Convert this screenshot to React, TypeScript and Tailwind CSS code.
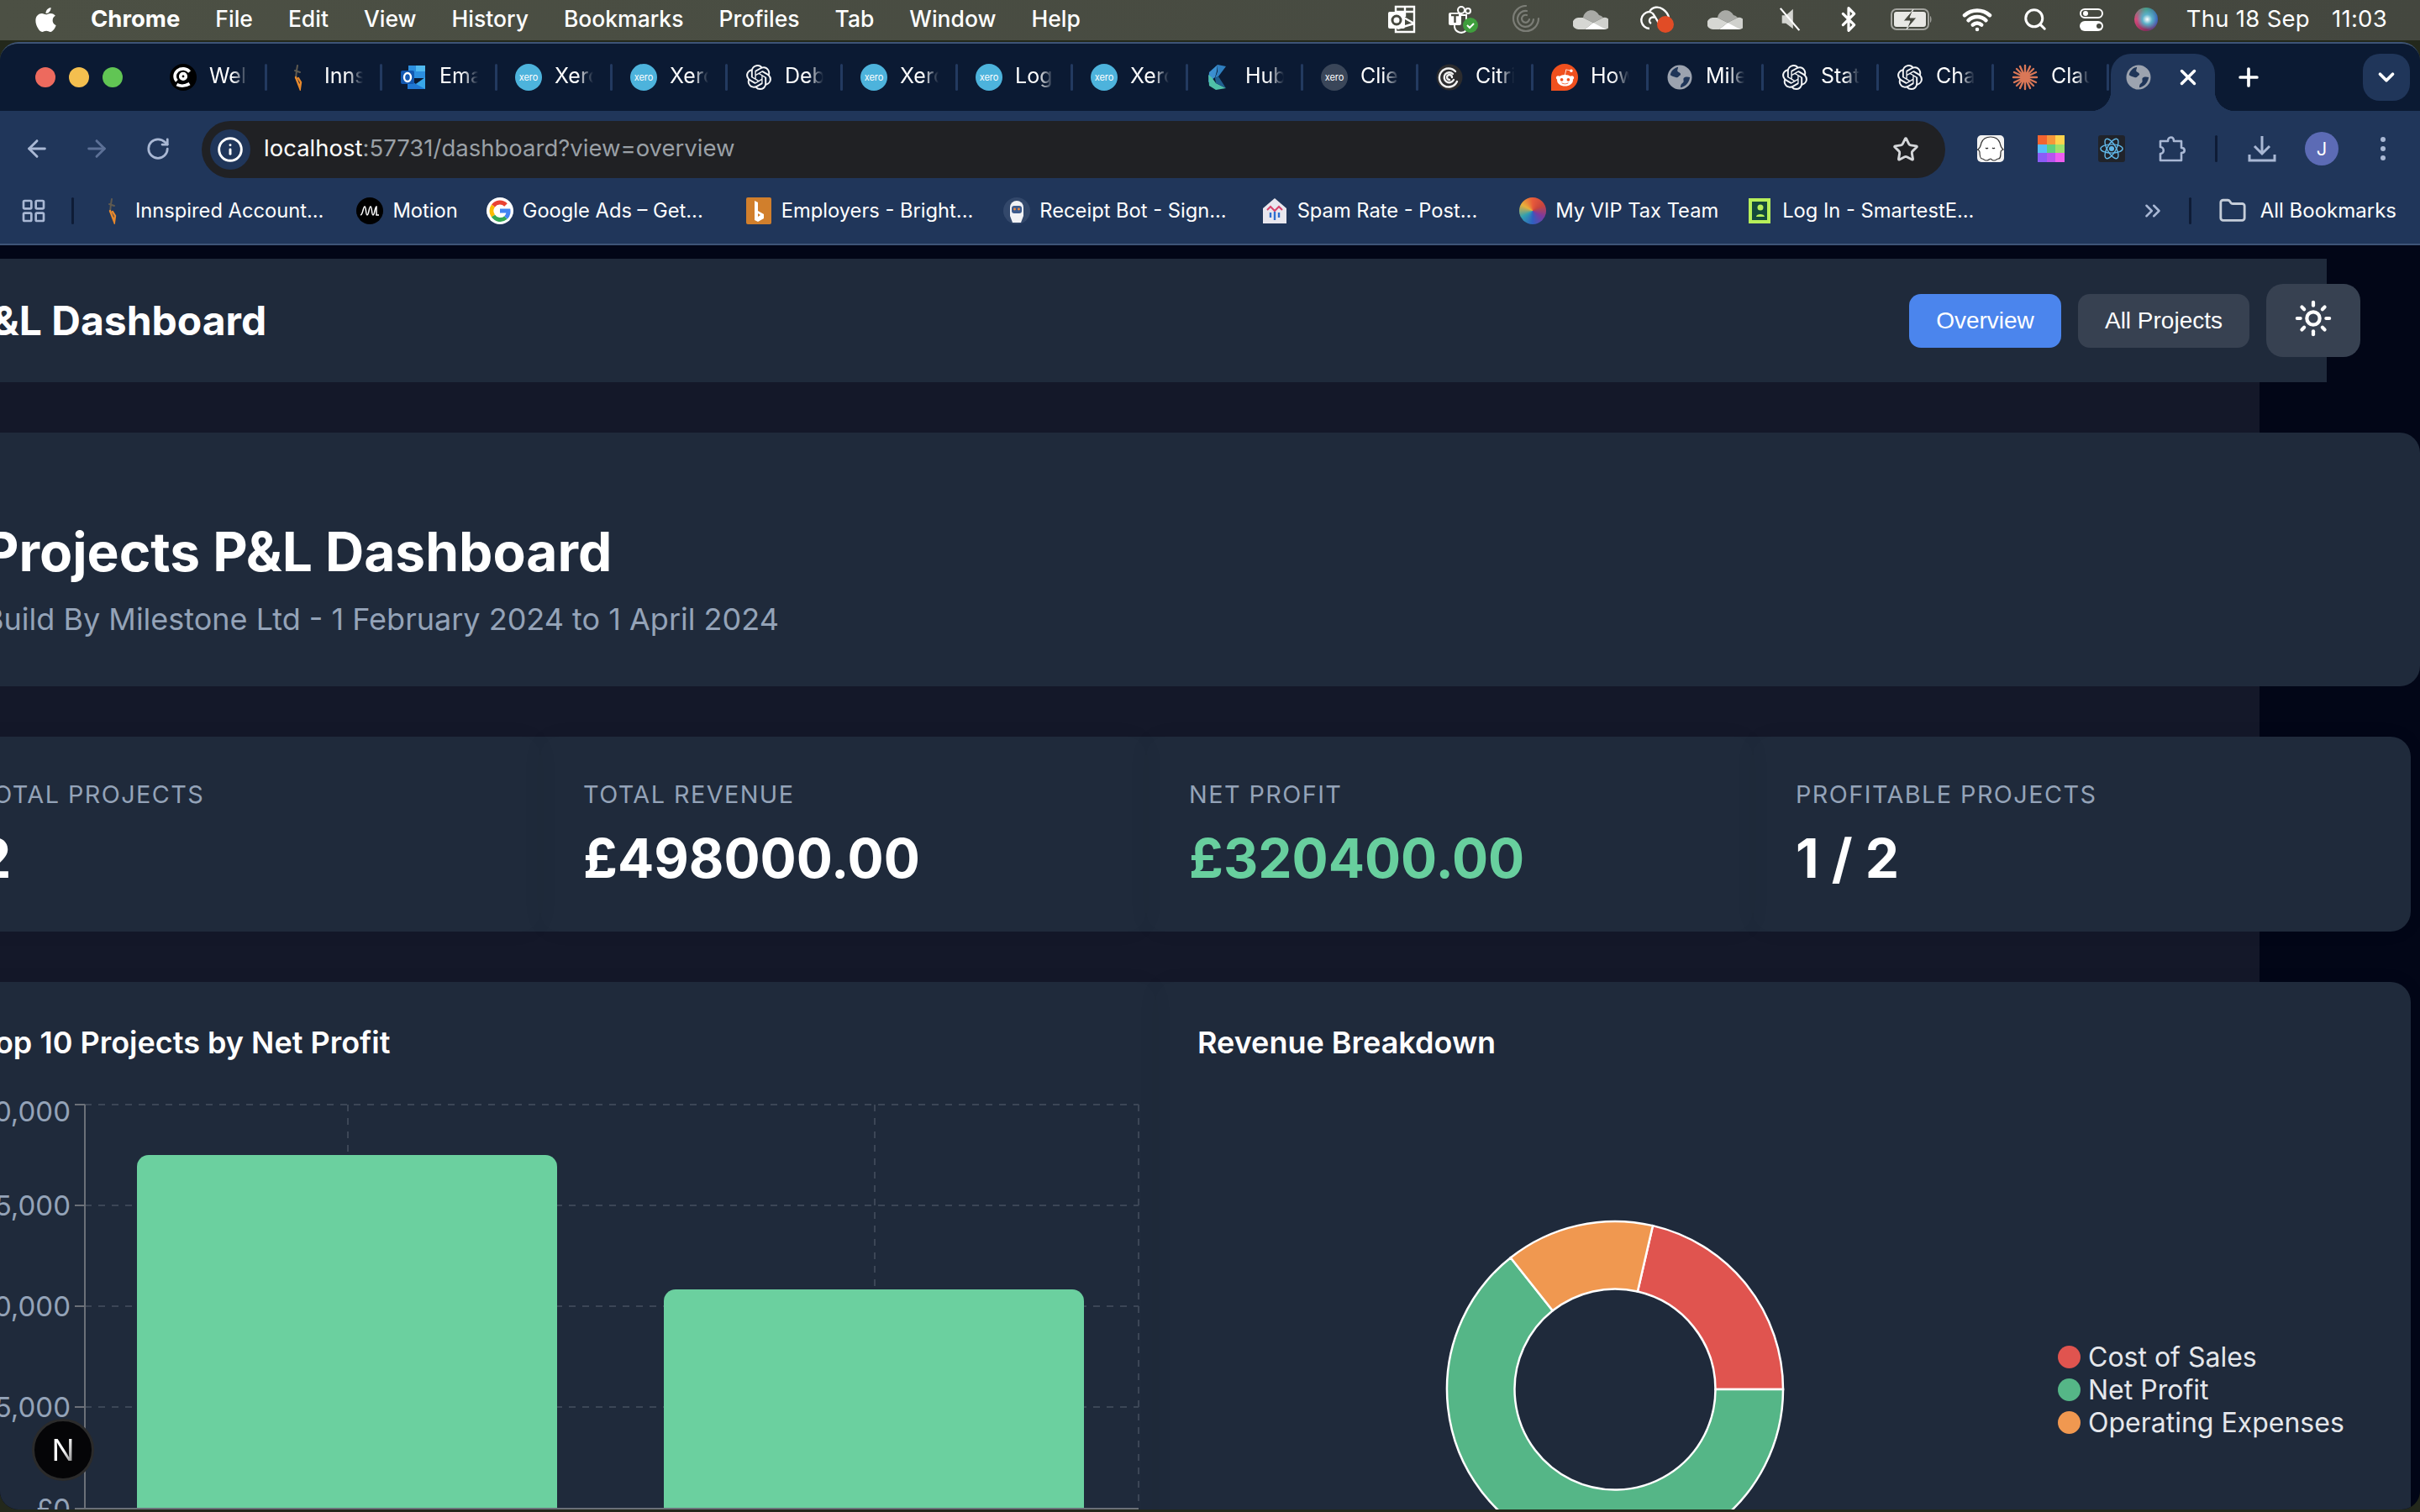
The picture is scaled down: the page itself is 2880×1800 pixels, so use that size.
import React from 'react';
import {
  ArrowLeft,
  ArrowRight,
  Bluetooth,
  ChevronDown,
  ChevronsRight,
  Folder,
  Info,
  LayoutGrid,
  Plus,
  RotateCw,
  Search,
  Star,
  Sun,
  Wifi,
  X,
} from 'lucide-react';
import { FaApple, FaRedditAlien } from 'react-icons/fa';
import { SiOpenai } from 'react-icons/si';

const ui = "font-['Inter',sans-serif]";

const XeroIcon = ({ dark = false }: { dark?: boolean }) => (
  <span className={`flex h-[32px] w-[32px] items-center justify-center rounded-full font-['Inter',sans-serif] text-[11px] text-white ${dark ? 'bg-[#3a4659]' : 'bg-[#4db3dc]'}`}>
    xero
  </span>
);

const SpiralIcon = () => (
  <svg viewBox="0 0 32 32" className="h-[32px] w-[32px]">
    <circle cx="16" cy="16" r="15.5" fill="#2c2c2e" />
    <path d="M25 21a11 11 0 1 1-2-12M21 19a6 6 0 1 1-1-7M16 19a3 3 0 1 1 3-3" fill="none" stroke="#f0f0f0" strokeWidth="2.4" strokeLinecap="round" />
  </svg>
);

const ClaudeIcon = () => (
  <svg viewBox="0 0 32 32" className="h-[32px] w-[32px]" stroke="#d97757" strokeWidth="2.4" strokeLinecap="round">
    <path d="M16 2v28M2 16h28M6 6l20 20M26 6L6 26M10 3l12 26M22 3L10 29M3 10l26 12M29 10L3 22" />
  </svg>
);

const RedditIcon = () => (
  <span className="relative flex h-[32px] w-[32px] items-center justify-center rounded-full rounded-bl-[6px] bg-[#f0501e] text-white">
    <FaRedditAlien size={23} />
  </span>
);

const MilestoneIcon = () => (
  <svg viewBox="0 0 32 32" className="h-[30px] w-[30px]">
    <circle cx="16" cy="16" r="14" fill="none" stroke="#9ca3af" strokeWidth="3" />
    <circle cx="16" cy="16" r="14" fill="#9ca3af" />
    <path d="M14 3c-5 1-9 5-10 10 2 2 5 2 7 3 3 1 4-2 6-3 1-3-3-3-4-5 0-2 1-3 1-5zM29 16c-3-1-6-1-8 1-1 2 1 4-1 6-2 1-3 3-3 6 6-1 11-6 12-13z" fill="#1f3558" />
  </svg>
);

const OutlookIcon = () => (
  <svg viewBox="0 0 32 32" className="h-[32px] w-[32px]">
    <rect x="10" y="2" width="20" height="15" fill="#2c8fe0" />
    <rect x="19" y="2" width="11" height="7" fill="#50b9f0" />
    <path d="M9 17l10 7 11-7v13H9z" fill="#1f78d4" />
    <path d="M19 24l11-8v14z" fill="#38a6e8" />
    <rect x="1" y="8" width="16" height="16" rx="2" fill="#1358b0" />
    <ellipse cx="9" cy="16" rx="4" ry="5" fill="none" stroke="#fff" strokeWidth="2.4" />
  </svg>
);

const InspiredIcon = () => (
  <svg viewBox="0 0 32 32" className="h-[32px] w-[32px]" fill="none" strokeLinecap="round" strokeWidth="2">
    <path d="M15 2l-1 6M12 8l6 2M14 8l-1 9" stroke="#5f5a50" />
    <path d="M13 16l5 13 1-7-3-5" stroke="#e8892c" strokeWidth="2.4" />
  </svg>
);

const WelIcon = () => (
  <span className="flex h-[32px] w-[32px] items-center justify-center rounded-full bg-black">
    <svg viewBox="0 0 24 24" className="h-[26px] w-[26px]" fill="none" stroke="#fff" strokeWidth="3.4">
      <path d="M19 6A9.5 9.5 0 0 0 6 4.5C2 8 2 13 5 16" />
      <circle cx="12" cy="11" r="3" />
      <path d="M5 20c4 2 9 2 14-1" />
    </svg>
  </span>
);

const HubIcon = () => (
  <svg viewBox="0 0 32 32" className="h-[32px] w-[32px]">
    <path d="M14 1L4 10l-1 12 8-6 2-7z" fill="#3b8fd0" />
    <path d="M3 13l1 13 8 5 12-2-12-6-5-7z" fill="#4fc0a8" />
    <path d="M14 1l10 2-9 12-4 2 3-8z" fill="#2f7fc0" />
    <path d="M11 17l4-2 9 14-12-6z" fill="#1f5f90" />
  </svg>
);

const OpenAiIcon = () => <SiOpenai size={30} color="#f3f4f6" />;

const tabs: { label: string; icon: React.ReactNode }[] = [
  { label: 'Welcome', icon: <WelIcon /> },
  { label: 'Innspired', icon: <InspiredIcon /> },
  { label: 'Email', icon: <OutlookIcon /> },
  { label: 'Xero', icon: <XeroIcon /> },
  { label: 'Xero', icon: <XeroIcon /> },
  { label: 'Debug', icon: <OpenAiIcon /> },
  { label: 'Xero', icon: <XeroIcon /> },
  { label: 'Login', icon: <XeroIcon /> },
  { label: 'Xero', icon: <XeroIcon /> },
  { label: 'Hub', icon: <HubIcon /> },
  { label: 'Client', icon: <XeroIcon dark /> },
  { label: 'Citrix', icon: <SpiralIcon /> },
  { label: 'How', icon: <RedditIcon /> },
  { label: 'Milestone', icon: <MilestoneIcon /> },
  { label: 'Status', icon: <OpenAiIcon /> },
  { label: 'Chat', icon: <OpenAiIcon /> },
  { label: 'Claude', icon: <ClaudeIcon /> },
];

const menuItems = ['File', 'Edit', 'View', 'History', 'Bookmarks', 'Profiles', 'Tab', 'Window', 'Help'];

const OneDrive = () => (
  <svg viewBox="0 0 42 28" className="h-[28px] w-[42px]">
    <path d="M12 12a10 10 0 0 1 19-3 8 8 0 0 1 5 3l-12 6z" fill="#a9aaa6" />
    <path d="M24 18l12-6a7 7 0 0 1 3 14H28z" fill="#d0d1cd" />
    <path d="M12 12l12 6-10 8H7a7 7 0 0 1-1-14z" fill="#d6d7d3" />
    <path d="M14 26l10-8 15 8z" fill="#fff" />
  </svg>
);

const StatusIcons = () => (
  <div className="ml-auto flex items-center">
    <div className="flex w-[74px] justify-center">
      <svg viewBox="0 0 34 34" className="h-[34px] w-[34px]" fill="none" stroke="#fff" strokeWidth="2.4">
        <path d="M10 8V2h22v30H10v-4M32 22l-14-8M12 28l20-6M21 2v12M10 8h22" />
        <rect x="1" y="8" width="20" height="20" rx="2" fill="#fff" stroke="none" />
        <circle cx="11" cy="18" r="5" stroke="#46483f" strokeWidth="3" />
      </svg>
    </div>
    <div className="flex w-[74px] justify-center">
      <svg viewBox="0 0 38 34" className="h-[34px] w-[38px]">
        <circle cx="16" cy="6" r="4" fill="none" stroke="#fff" strokeWidth="2" />
        <circle cx="24" cy="7" r="3" fill="none" stroke="#fff" strokeWidth="2" />
        <path d="M8 26a8 8 0 0 0 14 4V12H8z" fill="none" stroke="#fff" strokeWidth="2" />
        <rect x="1" y="9" width="15" height="15" rx="2" fill="#fff" />
        <path d="M4 12h9M8.500 12v9" stroke="#46483f" strokeWidth="2.4" />
        <circle cx="27" cy="24" r="9" fill="#3f9e3d" />
        <path d="M23 24l3 3 5-5" fill="none" stroke="#fff" strokeWidth="2" />
      </svg>
    </div>
    <div className="flex w-[74px] justify-center">
      <svg viewBox="0 0 34 34" className="h-[34px] w-[34px]" fill="none" stroke="#7b7d76" strokeWidth="2.2" strokeLinecap="round">
        <path d="M17 1a15 15 0 1 0 15 15M18 7a9.500 9.500 0 1 0 8 10M18 12a4.500 4.500 0 1 0 3 5" />
      </svg>
    </div>
    <div className="flex w-[80px] justify-center">
      <OneDrive />
    </div>
    <div className="flex w-[78px] justify-center">
      <svg viewBox="0 0 42 34" className="h-[34px] w-[42px]" fill="none" stroke="#fff" strokeWidth="2.4">
        <path d="M12 28a10 10 0 0 1-4-19c4-2 8 0 10 4l6 10M14 22a4 4 0 0 1 4-7M12 8c3-6 11-7 16-3 3 2 6 5 7 10" />
        <circle cx="31" cy="23" r="10" fill="#e14c26" stroke="none" />
      </svg>
    </div>
    <div className="flex w-[84px] justify-center">
      <OneDrive />
    </div>
    <div className="flex w-[72px] justify-center">
      <svg viewBox="0 0 30 32" className="h-[30px] w-[30px]">
        <path d="M4 11h5l9-8v25l-9-7H4z" fill="#d4d5d1" />
        <path d="M2 2l24 28" stroke="#fff" strokeWidth="2.4" />
      </svg>
    </div>
    <div className="flex w-[66px] justify-center text-white">
      <Bluetooth size={32} strokeWidth={2.4} />
    </div>
    <div className="flex w-[84px] justify-center">
      <svg viewBox="0 0 50 26" className="h-[26px] w-[50px]">
        <rect x="1" y="1" width="44" height="24" rx="6" fill="none" stroke="#a3a49f" strokeWidth="2" />
        <rect x="4" y="4" width="38" height="18" rx="3" fill="#e8e8e5" />
        <path d="M47 9c2 1 2 7 0 8z" fill="#a3a49f" />
        <path d="M27 1L15 15h8l-4 10 12-14h-8z" fill="#46483f" stroke="#e8e8e5" strokeWidth="1" />
      </svg>
    </div>
    <div className="flex w-[72px] justify-center text-white">
      <Wifi size={36} strokeWidth={3} />
    </div>
    <div className="flex w-[66px] justify-center text-white">
      <Search size={30} strokeWidth={2.4} />
    </div>
    <div className="flex w-[68px] justify-center">
      <div className="flex w-[28px] flex-col gap-[3px]">
        <span className="flex h-[12px] items-center rounded-full border-[2px] border-white pl-[2px]">
          <span className="h-[6px] w-[6px] rounded-full bg-white" />
        </span>
        <span className="flex h-[12px] items-center justify-end rounded-full bg-white pr-[2px]">
          <span className="h-[6px] w-[6px] rounded-full bg-[#46483f]" />
        </span>
      </div>
    </div>
    <div className="flex w-[62px] justify-center">
      <span className="h-[28px] w-[28px] rounded-full bg-[radial-gradient(circle_at_55%_50%,#fff_0%,#5ab0c8_28%,transparent_60%),conic-gradient(#47a08a,#3a5fc0,#8a2d5c,#d64a7a,#47a08a)]" />
    </div>
  </div>
);

const MenuBar = () => (
  <div className={`flex h-[48px] shrink-0 items-center bg-[linear-gradient(to_right,#4c5044,#44473f)] pb-[2px] text-[26.5px] text-white ${ui}`}>
    <FaApple size={33} className="ml-[38px]" />
    <span className="ml-[37px] text-[27.5px] font-bold">Chrome</span>
    <div className="ml-[42px] flex gap-[42px] font-medium">
      {menuItems.map((m) => (
        <span key={m}>{m}</span>
      ))}
    </div>
    <StatusIcons />
    <div className="ml-[17px] mr-[39px] flex gap-[26px] text-[27.5px] tracking-[0.01em]">
      <span>Thu 18 Sep</span>
      <span>11:03</span>
    </div>
  </div>
);

const TabStrip = () => (
  <div className="relative flex h-[80px] shrink-0 items-center bg-[#0b1a33] pl-[42px]">
    <div className="flex gap-[16px]">
      <span className="h-[24px] w-[24px] rounded-full bg-[#ed6a5e]" />
      <span className="h-[24px] w-[24px] rounded-full bg-[#f4bf4f]" />
      <span className="h-[24px] w-[24px] rounded-full bg-[#61c554]" />
    </div>
    <div className={`ml-[35px] flex text-[25px] text-white ${ui}`}>
      {tabs.map((t, i) => (
        <div key={i} className="flex w-[137px] items-center">
          <div className="ml-[21px] flex w-[32px] shrink-0 justify-center">{t.icon}</div>
          <span className="ml-[15px] w-[46px] overflow-hidden whitespace-nowrap pb-[2px] [mask-image:linear-gradient(to_right,black_60%,transparent)]">
            {t.label}
          </span>
          <span className="ml-auto h-[32px] w-[3px] shrink-0 rounded-full bg-[#233a60]" />
        </div>
      ))}
    </div>
    <div className="absolute bottom-0 left-[2512px] flex h-[68px] w-[124px] items-start rounded-t-[24px] bg-[#20365a] pl-[18px] pt-[13px] text-white">
      <span className="absolute bottom-0 left-[-24px] h-[24px] w-[24px] bg-[radial-gradient(circle_at_0_0,transparent_24px,#20365a_24.5px)]" />
      <span className="absolute bottom-0 right-[-24px] h-[24px] w-[24px] bg-[radial-gradient(circle_at_100%_0,transparent_24px,#20365a_24.5px)]" />
      <MilestoneIcon />
      <X size={30} strokeWidth={2.8} className="ml-[29px]" />
    </div>
    <Plus size={34} strokeWidth={2.6} className="absolute left-[2659px] top-[23px] text-white" />
    <div className="absolute left-[2812px] top-[12px] flex h-[56px] w-[56px] items-center justify-center rounded-[20px] bg-[#20365a] text-white">
      <ChevronDown size={30} strokeWidth={3} />
    </div>
  </div>
);

const Toolbar = () => (
  <div className={`flex h-[80px] shrink-0 items-center bg-[#20365a] pt-[12px] text-[#a9b8d4] ${ui}`}>
    <ArrowLeft size={32} className="ml-[28px] -mt-[2px]" strokeWidth={2.2} />
    <ArrowRight size={32} className="ml-[39px] -mt-[2px] text-[#5c7096]" strokeWidth={2.2} />
    <RotateCw size={30} className="ml-[42px] -mt-[2px]" strokeWidth={2.2} />
    <div className="ml-[37px] flex h-[68px] w-[2075px] items-center rounded-full bg-[#202124] pl-[10px] pr-[31px]">
      <span className="flex h-[48px] w-[48px] items-center justify-center rounded-full bg-[#20365a] text-white">
        <Info size={32} strokeWidth={2.2} />
      </span>
      <span className="ml-[16px] pb-[2px] text-[27.5px] text-white">
        localhost<span className="text-[#9aa0a6]">:57731/dashboard?view=overview</span>
      </span>
      <Star size={32} strokeWidth={2.2} className="ml-auto text-[#d5d7da]" />
    </div>
    <div className="ml-[38px] -mt-[2px] flex h-[32px] w-[32px] items-center justify-center rounded-[5px] bg-[#f2f2f2]">
      <svg viewBox="0 0 32 32" className="h-[32px] w-[32px]" fill="#fff" stroke="#333" strokeWidth="1.2">
        <path d="M1 17c3-2 3-4 4-8C7 4 11 2 16 2s9 2 11 7c1 4 1 6 4 8-2 1-3 1-3 3 0 4 0 8-3 8-2 0-2 2-5 2s-3-2-4-2-2 2-5 2-3-2-5-2-3-4-3-8c0-2-1-2-3-3z" />
        <path d="M10 15c1 1 2 1 3 0M18 15c1 1 2 1 3 0" fill="none" />
      </svg>
    </div>
    <div className="ml-[40px] -mt-[2px] grid h-[32px] w-[32px] grid-cols-3 grid-rows-3">
      <span className="bg-[#f26430]" /><span className="bg-[#f5973a]" /><span className="bg-[#fdd34d]" />
      <span className="bg-[#56bdf8]" /><span className="bg-[#5fcf80]" /><span className="bg-[#9de06b]" />
      <span className="bg-[#8b5cf6]" /><span className="bg-[#b854ef]" /><span className="bg-[#ee5ef0]" />
    </div>
    <div className="ml-[40px] -mt-[2px] flex h-[32px] w-[32px] items-center justify-center rounded-[3px] bg-[#20232a]">
      <svg viewBox="-16 -16 32 32" className="h-[30px] w-[30px]" fill="none" stroke="#61b8e8" strokeWidth="1.5">
        <ellipse rx="14" ry="5.500" />
        <ellipse rx="14" ry="5.500" transform="rotate(60)" />
        <ellipse rx="14" ry="5.500" transform="rotate(120)" />
        <circle r="2.500" fill="#61b8e8" />
      </svg>
    </div>
    <svg viewBox="0 0 34 34" className="ml-[39px] -mt-[2px] h-[34px] w-[34px]" fill="none" stroke="#a9b8d4" strokeWidth="2.6" strokeLinejoin="round">
      <path d="M3 8h9c0-6 7-6 7 0h9v8c5 0 5 6 0 6v9H3v-8c5 0 5-8 0-8z" />
    </svg>
    <span className="ml-[34px] -mt-[2px] h-[32px] w-[3px] rounded-full bg-[#0e1c36]" />
    <svg viewBox="0 0 34 34" className="ml-[36px] -mt-[2px] h-[34px] w-[34px]" fill="none" stroke="#a9b8d4" strokeWidth="3">
      <path d="M17 2v20M8 14l9 9 9-9M2 24v7h30v-7" />
    </svg>
    <span className="ml-[34px] -mt-[2px] flex h-[40px] w-[40px] items-center justify-center rounded-full bg-[#5c6bb5] text-[22px] text-white">J</span>
    <svg viewBox="0 0 6 32" className="ml-[50px] -mt-[2px] h-[32px] w-[6px]" fill="#a9b8d4">
      <circle cx="3" cy="5" r="3" />
      <circle cx="3" cy="16" r="3" />
      <circle cx="3" cy="27" r="3" />
    </svg>
  </div>
);

const GoogleIcon = () => (
  <svg viewBox="0 0 32 32" className="h-[32px] w-[32px]">
    <circle cx="16" cy="16" r="16" fill="#fff" />
    <g fill="none" strokeWidth="5">
      <path d="M23 9a10 10 0 0 0-15 1" stroke="#ea4335" />
      <path d="M8 10a10 10 0 0 0 0 12" stroke="#fbbc05" />
      <path d="M8 22a10 10 0 0 0 15 2" stroke="#34a853" />
      <path d="M23 24a10 10 0 0 0 3-8H16" stroke="#4285f4" />
    </g>
  </svg>
);

const bookmarks: { label: string; gap: string; icon: React.ReactNode }[] = [
  { label: 'Innspired Account...', gap: 'ml-0', icon: <InspiredIcon /> },
  {
    label: 'Motion',
    gap: 'ml-[39px]',
    icon: (
      <svg viewBox="0 0 32 32" className="h-[32px] w-[32px]">
        <circle cx="16" cy="16" r="16" fill="#000" />
        <path d="M5 21c3 0 3-10 5-10s1 10 3 10 2-10 4-10 1 10 3 10 2-10 4-10v10h3" fill="none" stroke="#fff" strokeWidth="1.5" />
      </svg>
    ),
  },
  { label: 'Google Ads – Get...', gap: 'ml-[34px]', icon: <GoogleIcon /> },
  {
    label: 'Employers - Bright...',
    gap: 'ml-[50px]',
    icon: (
      <svg viewBox="0 0 30 32" className="h-[32px] w-[30px]">
        <rect width="30" height="32" rx="2" fill="#d17f2c" />
        <path d="M10 4l4 2v10l7 4v5l-7 4-4-2z" fill="#fff" />
        <path d="M14 19l3 2-3 2z" fill="#d17f2c" />
      </svg>
    ),
  },
  {
    label: 'Receipt Bot - Sign...',
    gap: 'ml-[36px]',
    icon: (
      <svg viewBox="0 0 32 32" className="h-[32px] w-[32px]">
        <circle cx="16" cy="16" r="16" fill="#33486b" />
        <path d="M8 12a8 8 0 0 1 16 0v10l-3 8H11l-3-8z" fill="#f1f2f5" />
        <rect x="10" y="10" width="12" height="9" rx="3" fill="#3c5a8c" />
        <circle cx="13.500" cy="14" r="1.400" fill="#f08a3c" />
        <circle cx="18.500" cy="14" r="1.400" fill="#f08a3c" />
      </svg>
    ),
  },
  {
    label: 'Spam Rate - Post...',
    gap: 'ml-[41px]',
    icon: (
      <svg viewBox="0 0 32 32" className="h-[32px] w-[32px]">
        <path d="M16 1l14 12v18H2V13z" fill="#e9e7ee" />
        <path d="M7 15l4-4 5 5 5-5 4 4" fill="none" stroke="#d8436b" strokeWidth="2" />
        <path d="M16 17v10M11 18v6M21 18v6" stroke="#2f6fd0" strokeWidth="2.4" />
      </svg>
    ),
  },
  {
    label: 'My VIP Tax Team',
    gap: 'ml-[50px]',
    icon: <span className="h-[32px] w-[32px] rounded-full bg-[conic-gradient(#e85a3a,#c8453c,#7a3aa0,#2f5fc0,#30a0b0,#e8b03a,#e85a3a)]" />,
  },
  {
    label: 'Log In - SmartestE...',
    gap: 'ml-[33px]',
    icon: (
      <svg viewBox="0 0 26 30" className="h-[30px] w-[26px]">
        <rect width="26" height="30" fill="#b7ef5a" />
        <rect x="4" y="4" width="18" height="22" fill="#14493c" />
        <circle cx="14" cy="11" r="3.500" fill="#b7ef5a" />
        <path d="M9 22c0-4 10-4 10 0z" fill="#b7ef5a" />
      </svg>
    ),
  },
];

const BookmarkBar = () => (
  <div className={`flex h-[80px] shrink-0 items-center border-b-[2px] border-[#3e5477] bg-[#20365a] text-[23.7px] text-white ${ui}`}>
    <LayoutGrid size={32} strokeWidth={2} className="ml-[24px] text-[#a9b8d4]" />
    <span className="ml-[29px] h-[32px] w-[3px] rounded-full bg-[#0e1c36]" />
    <div className="ml-[30px] flex items-center">
      {bookmarks.map((b) => (
        <div key={b.label} className={`flex items-center gap-[11px] whitespace-nowrap ${b.gap}`}>
          <span className="flex w-[32px] shrink-0 justify-center">{b.icon}</span>
          {b.label}
        </div>
      ))}
    </div>
    <ChevronsRight size={30} strokeWidth={2} className="ml-auto text-[#a9b8d4]" />
    <span className="ml-[28px] h-[32px] w-[3px] rounded-full bg-[#0e1c36]" />
    <Folder size={34} strokeWidth={2} className="ml-[32px] text-[#c5cdd9]" />
    <span className="ml-[16px] mr-[28px] text-[24px]">All Bookmarks</span>
  </div>
);

const stats = [
  { label: 'Total Projects', value: '2', color: 'text-white' },
  { label: 'Total Revenue', value: '£498000.00', color: 'text-white' },
  { label: 'Net Profit', value: '£320400.00', color: 'text-[#68cf9e]' },
  { label: 'Profitable Projects', value: '1 / 2', color: 'text-white' },
];

const BarChart = () => {
  const ticks = [
    { y: 0, dy: 22, label: '£20,000' },
    { y: 120, dy: 14, label: '£15,000' },
    { y: 240, dy: 14, label: '£10,000' },
    { y: 360, dy: 14, label: '£5,000' },
    { y: 481, dy: 14, label: '£0' },
  ];
  return (
    <svg width="1450" height="520" className="-ml-[51px] mt-[50px] block overflow-visible">
      <g stroke="#3c4656" strokeWidth="2" strokeDasharray="8 8">
        {ticks.slice(0, 4).map((t) => (
          <line key={t.y} x1="179" x2="1433" y1={t.y + 2} y2={t.y + 2} />
        ))}
        <line x1="492" x2="492" y1="2" y2="481" />
        <line x1="1119" x2="1119" y1="2" y2="481" />
        <line x1="1433" x2="1433" y1="2" y2="481" />
      </g>
      <rect x="241" y="62" width="500" height="440" rx="14" fill="#6bd09f" />
      <rect x="868" y="222" width="500" height="280" rx="14" fill="#6bd09f" />
      <g stroke="#6b7078" strokeWidth="2">
        <line x1="179" x2="179" y1="2" y2="483" />
        <line x1="179" x2="1433" y1="483" y2="483" />
        {ticks.map((t) => (
          <line key={t.y} x1="167" x2="179" y1={t.y + 2} y2={t.y + 2} />
        ))}
      </g>
      {ticks.map((t) => (
        <text key={t.y} x="162" y={t.y + t.dy} textAnchor="end" fill="#94a3b8" fontSize="33" fontFamily="Inter, sans-serif">
          {t.label}
        </text>
      ))}
    </svg>
  );
};

const arc = (from: number, to: number) => {
  const R = 200;
  const r = 119.5;
  const p = (rad: number, deg: number) => {
    const a = (deg * Math.PI) / 180;
    return `${(rad * Math.cos(a)).toFixed(2)} ${(-rad * Math.sin(a)).toFixed(2)}`;
  };
  const large = to - from > 180 ? 1 : 0;
  return `M${p(R, from)} A${R} ${R} 0 ${large} 0 ${p(R, to)} L${p(r, to)} A${r} ${r} 0 ${large} 1 ${p(r, from)} Z`;
};

const legend = [
  { label: 'Cost of Sales', color: 'bg-[#e0544f]' },
  { label: 'Net Profit', color: 'bg-[#55b687]' },
  { label: 'Operating Expenses', color: 'bg-[#f09850]' },
];

const Dashboard = () => (
  <div className="relative flex-1 overflow-hidden bg-[#020617] pt-[16px]">
    <div className={`-ml-[78px] flex w-[2767px] flex-col gap-[60px] bg-[#141829] text-white ${ui}`}>
      <header className="flex h-[147px] w-[2847px] items-center justify-between bg-[#1f2a3b] pl-[39px] pr-[92px]">
        <h1 className="text-[48px] font-bold whitespace-nowrap">P&amp;L Dashboard</h1>
        <nav className="flex gap-[20px] font-['Liberation_Sans',sans-serif] text-[28px]">
          <button className="h-[64px] w-[181px] rounded-[14px] bg-[#4b85ed] text-white">Overview</button>
          <button className="h-[64px] w-[204px] rounded-[14px] bg-[#374151] text-white">All Projects</button>
        </nav>
      </header>

      <section className="h-[302px] w-[2958px] rounded-[24px] bg-[#1f2a3b] pl-[59px] pt-[103px]">
        <h2 className="text-[64px] font-bold leading-[78px] whitespace-nowrap">Projects P&amp;L Dashboard</h2>
        <p className="mt-[14px] text-[36px] text-[#94a3b8] whitespace-nowrap">Build By Milestone Ltd - 1 February 2024 to 1 April 2024</p>
      </section>

      <section className="grid h-[232px] w-[2947px] grid-cols-[721px_721px_722px_783px] rounded-[24px] bg-[#1f2a3b]">
        {stats.map((s) => (
          <div key={s.label} className="rounded-[24px] px-[51px] pt-[52px] shadow-[0_0_24px_rgba(0,0,0,0.05)]">
            <div className="text-[28.8px] uppercase leading-[34px] tracking-[0.05em] text-[#94a3b8]">{s.label}</div>
            <div className={`mt-[20px] text-[64px] font-bold leading-[78px] ${s.color}`}>{s.value}</div>
          </div>
        ))}
      </section>

      <section className="grid w-[2947px] grid-cols-[1453px_1494px] rounded-[24px] bg-[#1f2a3b]">
        <div className="h-[800px] rounded-[24px] pl-[51px] pt-[50px] shadow-[0_0_24px_rgba(0,0,0,0.05)]">
          <h3 className="text-[36px] font-semibold leading-[44px] whitespace-nowrap">Top 10 Projects by Net Profit</h3>
          <BarChart />
        </div>
        <div className="h-[800px] rounded-[24px] pl-[50px] pt-[50px] shadow-[0_0_24px_rgba(0,0,0,0.05)]">
          <h3 className="text-[36px] font-semibold leading-[44px] whitespace-nowrap">Revenue Breakdown</h3>
          <div className="mt-[189px] flex">
            <svg viewBox="-202 -202 404 404" className="ml-[295px] h-[404px] w-[404px] shrink-0">
              <g stroke="#fff" strokeWidth="2.5">
                <path d={arc(0, 77)} fill="#e0544f" />
                <path d={arc(128.4, 360)} fill="#55b687" />
                <path d={arc(77, 128.4)} fill="#f09850" />
              </g>
            </svg>
            <ul className="ml-[325px] mt-[144px] flex flex-col text-[32px] leading-[39px] text-[#e5e7eb]">
              {legend.map((l) => (
                <li key={l.label} className="flex items-center gap-[9px] whitespace-nowrap">
                  <span className={`h-[27px] w-[27px] rounded-full ${l.color}`} />
                  {l.label}
                </li>
              ))}
            </ul>
          </div>
        </div>
      </section>
    </div>

    <button className="absolute left-[2697px] top-[46px] flex h-[87px] w-[112px] items-center justify-center rounded-[20px] bg-[#374151] pb-[6px] text-white">
      <Sun size={46} strokeWidth={2.2} />
    </button>

    <div className="absolute bottom-[34px] left-[38px] flex h-[74px] w-[74px] items-center justify-center rounded-full border-[3px] border-[#2b2b2b] bg-[#050507]">
      <span className={`bg-linear-to-br from-white via-white to-[#555] bg-clip-text text-[36px] text-transparent ${ui}`}>N</span>
    </div>
  </div>
);

const App: React.FC = () => {
  return (
    <div className="flex h-[1800px] w-[2880px] flex-col overflow-hidden bg-[#23281b]">
      <MenuBar />
      <div className="mb-[3px] mt-[2px] flex min-h-0 flex-1 flex-col overflow-hidden rounded-[22px] border-t-[2px] border-[#3e5477]">
        <TabStrip />
        <Toolbar />
        <BookmarkBar />
        <Dashboard />
      </div>
    </div>
  );
};

export default App;
